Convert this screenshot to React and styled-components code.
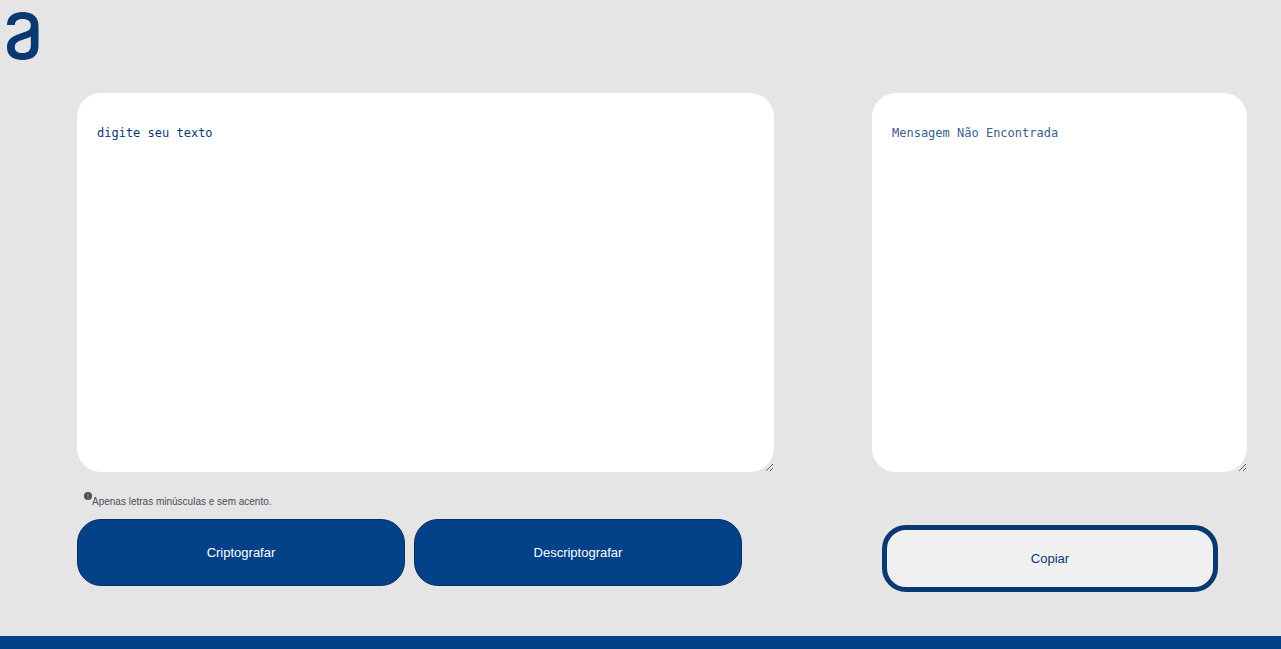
import React, { useState } from "react";
import styled, { createGlobalStyle } from "styled-components";

const GlobalStyle = createGlobalStyle`
  * { box-sizing: border-box; }
  body {
    margin: 0;
    background: #e5e5e5;
    font-family: "Liberation Sans", Arial, sans-serif;
  }
`;

const Page = styled.div`
  display: flex;
  flex-direction: column;
  min-height: 100vh;
`;

const Header = styled.header`
  padding: 12px 6px 0;
  height: 93px;
`;

const Logo = styled.svg`
  display: block;
  width: 34px;
  height: 48px;
`;

const Main = styled.main`
  flex: 1;
  display: grid;
  grid-template-columns: 697fr 375fr;
  column-gap: 98px;
  align-items: start;
  padding: 0 34px 44px 77px;
`;

const Column = styled.section`
  display: flex;
  flex-direction: column;
`;

const TextBox = styled.textarea`
  display: block;
  width: 100%;
  height: 379px;
  padding: 32px 20px;
  border: 0;
  border-radius: 24px;
  background: #fff;
  color: #0a3871;
  font: 12px/16px "DejaVu Sans Mono", monospace;
  resize: both;
  outline: none;

  &::placeholder {
    color: ${(p) => (p.$soft ? "#3b608d" : "#0a3871")};
    opacity: 1;
  }
`;

const Note = styled.p`
  display: flex;
  align-items: flex-start;
  margin: 20px 0 7px 7px;
  color: #495057;
  font-size: 10px;
  line-height: 20px;

  svg {
    width: 8px;
    height: 8px;
    flex: none;
  }
`;

const Actions = styled.div`
  display: flex;
  gap: 9px;
  width: 95.4%;
`;

const Button = styled.button`
  height: 67px;
  padding: 0 16px;
  border-radius: 24px;
  font: 13px "Liberation Sans", Arial, sans-serif;
  cursor: pointer;
`;

const PrimaryButton = styled(Button)`
  flex: 1;
  border: 1px solid #0a2f61;
  background: #034189;
  color: #fff;
`;

const CopyButton = styled(Button)`
  width: 89.6%;
  margin: 53px 0 0 10px;
  border: 5px solid #0a3871;
  background: #f0f0f0;
  color: #0a3871;
`;

const Footer = styled.footer`
  height: 13px;
  background: #034189;
`;

export default function App() {
  const [text, setText] = useState("");
  const [result, setResult] = useState("");

  const encrypt = () =>
    setResult(
      text
        .replace(/e/g, "enter")
        .replace(/i/g, "imes")
        .replace(/a/g, "ai")
        .replace(/o/g, "ober")
        .replace(/u/g, "ufat")
    );
  const decrypt = () =>
    setResult(
      text
        .replace(/enter/g, "e")
        .replace(/imes/g, "i")
        .replace(/ai/g, "a")
        .replace(/ober/g, "o")
        .replace(/ufat/g, "u")
    );

  return (
    <>
      <GlobalStyle />
      <Page>
        <Header>
          <Logo viewBox="0 0 34 48" fill="#0a3871" fillRule="evenodd" aria-hidden="true">
            <path d="M1 13C1 5 7 0 16.5 0C27 0 32.5 5 32.5 14V34C32.5 43 27 48 16.5 48C6 48 1 43 1 35.5C1 28.5 5 25 11 22.8L20 19.6C23.5 18.3 24.8 16.5 24.8 13.5C24.8 9.3 22 7 16.5 7C11.5 7 8.8 9.3 8.8 13ZM24.8 24.5C23 25.8 20 26.7 14.5 28.6C10.5 30 8.8 32 8.8 35.5C8.8 39 11.5 41 16.5 41C22 41 24.8 38.5 24.8 33.5Z" />
          </Logo>
        </Header>
        <Main>
          <Column>
            <TextBox
              aria-label="Texto"
              placeholder="digite seu texto"
              value={text}
              onChange={(e) => setText(e.target.value)}
            />
            <Note>
              <svg viewBox="0 0 8 8" aria-hidden="true">
                <circle cx="4" cy="4" r="4" fill="#495057" />
                <path d="M4 1.8V4.5M4 5.3V6.3" stroke="#a5a8ab" strokeWidth="1" />
              </svg>
              Apenas letras minúsculas e sem acento.
            </Note>
            <Actions>
              <PrimaryButton type="button" onClick={encrypt}>Criptografar</PrimaryButton>
              <PrimaryButton type="button" onClick={decrypt}>Descriptografar</PrimaryButton>
            </Actions>
          </Column>
          <Column>
            <TextBox
              $soft
              aria-label="Resultado"
              placeholder="Mensagem Não Encontrada"
              value={result}
              onChange={(e) => setResult(e.target.value)}
            />
            <CopyButton type="button" onClick={() => navigator.clipboard?.writeText(result)}>
              Copiar
            </CopyButton>
          </Column>
        </Main>
        <Footer />
      </Page>
    </>
  );
}
